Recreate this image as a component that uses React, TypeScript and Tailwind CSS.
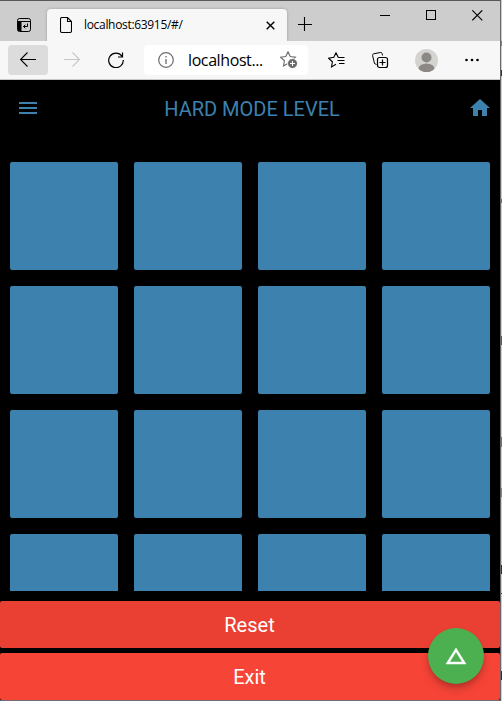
import React from "react";

type IconProps = { w: number; h: number; className?: string; children: React.ReactNode };

function Icon({ w, h, className = "", children }: IconProps) {
  return (
    <svg
      width={w}
      height={h}
      viewBox={`0 0 ${w} ${h}`}
      fill="none"
      stroke="currentColor"
      className={`block shrink-0 ${className}`}
    >
      {children}
    </svg>
  );
}

function TabStrip() {
  return (
    <div className="flex h-10 shrink-0 bg-[#cdcdcd] text-black">
      <div className="w-[47px] shrink-0 pt-[17px] pl-[17px]">
        <Icon w={14} h={14}>
          <rect x="0.5" y="0.5" width="13" height="13" rx="2" />
          <path d="M1 4h3.500v9H1z" fill="currentColor" stroke="none" />
          <path d="M1 3.500h12" />
          <path d="M10.500 5.500V8.500H6.500M8.300 6.700l-1.800 1.800 1.800 1.800" />
        </Icon>
      </div>
      <div className="flex h-8 w-[240px] shrink-0 self-end rounded-t bg-[#f7f7f7] shadow-[0_0_3px_rgba(0,0,0,0.25)]">
        <Icon w={12} h={16} className="mt-[8px] ml-[13px]">
          <path d="M2 .5h5.500l4 4V14a1.500 1.500 0 0 1-1.500 1.500H2A1.500 1.500 0 0 1 .5 14V2A1.500 1.500 0 0 1 2 .5zM7.500 .5V4.500h4" strokeWidth="1.1" />
        </Icon>
        <span className="mt-[8px] ml-[12px] w-[182px] text-[12px] leading-4 tracking-[-0.32px] whitespace-nowrap">
          localhost:63915/#/
        </span>
        <Icon w={9} h={9} className="mt-[12px]">
          <path d="M.7.7l7.600 7.600M8.300.7L.7 8.300" strokeWidth="1.4" />
        </Icon>
      </div>
      <Icon w={14} h={14} className="mt-[16px] ml-[11px]">
        <path d="M0 7.500h14M6.500 0v14" strokeWidth="1.1" />
      </Icon>
      <div className="ml-auto flex items-start gap-[36px] pt-[9px] pr-[17px]">
        <Icon w={10} h={10}>
          <path d="M0 5.500h10" />
        </Icon>
        <Icon w={10} h={10}>
          <rect x=".5" y=".5" width="9" height="9" />
        </Icon>
        <Icon w={11} h={11}>
          <path d="M.3.3l10 10M10.300.3l-10 10" strokeWidth="1.1" />
        </Icon>
      </div>
    </div>
  );
}

const STAR = "M8 .8l2.200 4.700 5.200.7-3.800 3.600.9 5.100L8 12.400l-4.500 2.500.9-5.100L.6 6.200l5.200-.7z";

function Toolbar() {
  return (
    <div className="flex h-[39px] shrink-0 items-center border-b border-[#c9c9c9] bg-[#f7f7f7] pl-2 text-black">
      <button className="flex h-[30px] w-10 items-center justify-center rounded-sm bg-[#dcdcdc]">
        <Icon w={16} h={16}>
          <path d="M.5 7.500H16M7.500 .5L.5 7.500l7 7" strokeWidth="1.1" />
        </Icon>
      </button>
      <Icon w={16} h={16} className="ml-4 text-[#c6c6c6]">
        <path d="M0 7.500h15.500M8.500 .5l7 7-7 7" strokeWidth="1.1" />
      </Icon>
      <Icon w={16} h={16} className="ml-7">
        <path d="M15.300 8A7.300 7.300 0 1 1 14 4.200M14.500.5v4.500H10" strokeWidth="1.2" />
      </Icon>
      <div className="ml-5 flex h-[30px] w-[164px] items-center rounded bg-white">
        <Icon w={16} h={16} className="ml-[14px] text-[#6c6c6c]">
          <circle cx="8" cy="8" r="7.300" strokeWidth="1.2" />
          <path d="M8 7v5M8 4v1.500" strokeWidth="1.300" />
        </Icon>
        <span className="ml-[14px] w-[92px] text-[16px] leading-5 tracking-[-0.4px] whitespace-nowrap">
          localhost...
        </span>
        <Icon w={18} h={18} className="text-[#6c6c6c]">
          <path d={STAR} strokeWidth="1.1" />
          <circle cx="12.500" cy="12.500" r="5" fill="#6c6c6c" stroke="white" />
          <path d="M10 12.500h5M12.500 10v5" stroke="white" />
        </Icon>
      </div>
      <Icon w={17} h={16} className="ml-5">
        <path d="M10.500 5.500L10.200 5.300 8 .8 5.800 5.300.6 6.200l3.800 3.600-.9 5.100L8 12.300M10.500 5.500h6M9.500 8.500h7M11 11.500h5.500" strokeWidth="1.100" />
      </Icon>
      <Icon w={17} h={17} className="ml-[27px]">
        <path d="M4.500 12.500L2.500 11.500.6 3.600a1.500 1.500 0 0 1 1.100-1.800L8.300.5a1.500 1.500 0 0 1 1.800 1.100l.5 1.900" />
        <rect x="5.500" y="5.500" width="10" height="10" rx="2" fill="#f7f7f7" strokeWidth="1.200" />
        <path d="M7.500 10.500h6M10.500 7.500v6" strokeWidth="1.200" />
      </Icon>
      <div className="ml-[26px] h-[23px] w-[23px] overflow-hidden rounded-full bg-[#d4d3d0]">
        <svg viewBox="0 0 23 23" width="23" height="23" fill="#8b8885">
          <circle cx="11.500" cy="8.500" r="5" />
          <ellipse cx="11.500" cy="20" rx="8" ry="5.500" />
        </svg>
      </div>
      <Icon w={14} h={4} className="ml-[27px]">
        <g fill="currentColor" stroke="none">
          <circle cx="1.500" cy="2" r="1.300" />
          <circle cx="7" cy="2" r="1.300" />
          <circle cx="12.500" cy="2" r="1.300" />
        </g>
      </Icon>
    </div>
  );
}

function AppBar() {
  return (
    <header className="flex h-14 shrink-0 items-center justify-between pr-2 pl-4 text-[#3d82af]">
      <svg width="24" height="24" viewBox="0 0 24 24" fill="currentColor">
        <path d="M3 18h18v-2H3v2zm0-5h18v-2H3v2zm0-7v2h18V6H3z" />
      </svg>
      <h1 className="ml-[-4px] pt-[2px] text-[20px] leading-6 font-normal whitespace-nowrap">HARD MODE LEVEL</h1>
      <svg width="24" height="24" viewBox="0 0 24 24" fill="currentColor">
        <path d="M10 20v-6h4v6h5v-8h3L12 3 2 12h3v8z" />
      </svg>
    </header>
  );
}

/* Edge of the editor window that shows behind the browser. */
function BackgroundWindow() {
  return (
    <div className="flex w-px shrink-0 flex-col bg-[#cecece]">
      <div className="mt-[41px] h-[5px] bg-[#5f8fb0]" />
      <div className="mt-[24px] h-[6px] bg-[#333333]" />
      <div className="mt-[123px] h-[4px] bg-[#8a6a60]" />
      <div className="mt-[133px] h-[9px] bg-[#555c75]" />
      <div className="mt-[92px] h-[10px] bg-[#6f6fa5]" />
      <div className="mt-[41px] h-[9px] bg-[#8a8278]" />
      <div className="mt-[68px] h-[9px] bg-[#26267c]" />
      <div className="mt-[19px] h-px bg-[#444444]" />
      <div className="mt-[77px] h-[9px] bg-[#26267c]" />
    </div>
  );
}

export default function App() {
  return (
    <div className="flex h-[701px] w-[502px] overflow-hidden font-['Open_Sans','Noto_Sans',sans-serif]">
      <div className="flex w-[501px] shrink-0 flex-col border-t border-r border-b border-t-[#59575a] border-r-[#69666a] border-b-[#716d70]">
        <TabStrip />
        <Toolbar />
        <main className="relative flex min-h-0 flex-1 flex-col bg-black font-['Roboto',sans-serif]">
          <AppBar />
          <div className="mt-[26px] grid h-[429px] shrink-0 auto-rows-[108px] grid-cols-[repeat(4,108px)] gap-4 overflow-hidden pl-[10px]">
            {Array.from({ length: 16 }, (_, i) => (
              <div key={i} className="rounded-[2px] bg-[#3d82af]" />
            ))}
          </div>
          <div className="mt-[10px] flex flex-col gap-[5px] text-[20px] text-white">
            <button className="h-[47px] rounded-[2px] bg-[#ea4034] pr-px">Reset</button>
            <button className="h-[47px] rounded-[2px] bg-[#f64437] pr-px">Exit</button>
          </div>
          <button className="absolute right-4 bottom-4 flex h-14 w-14 items-center justify-center rounded-full bg-[#4caf50] text-white shadow-[0_3px_5px_-1px_rgba(0,0,0,0.2),0_6px_10px_rgba(0,0,0,0.14)]">
            <svg width="24" height="24" viewBox="0 0 24 24" fill="currentColor" stroke="currentColor" strokeWidth="0.5">
              <path d="M12 7.770L18.390 18H5.610L12 7.770M12 4L2 20h20L12 4z" />
            </svg>
          </button>
        </main>
      </div>
      <BackgroundWindow />
    </div>
  );
}
